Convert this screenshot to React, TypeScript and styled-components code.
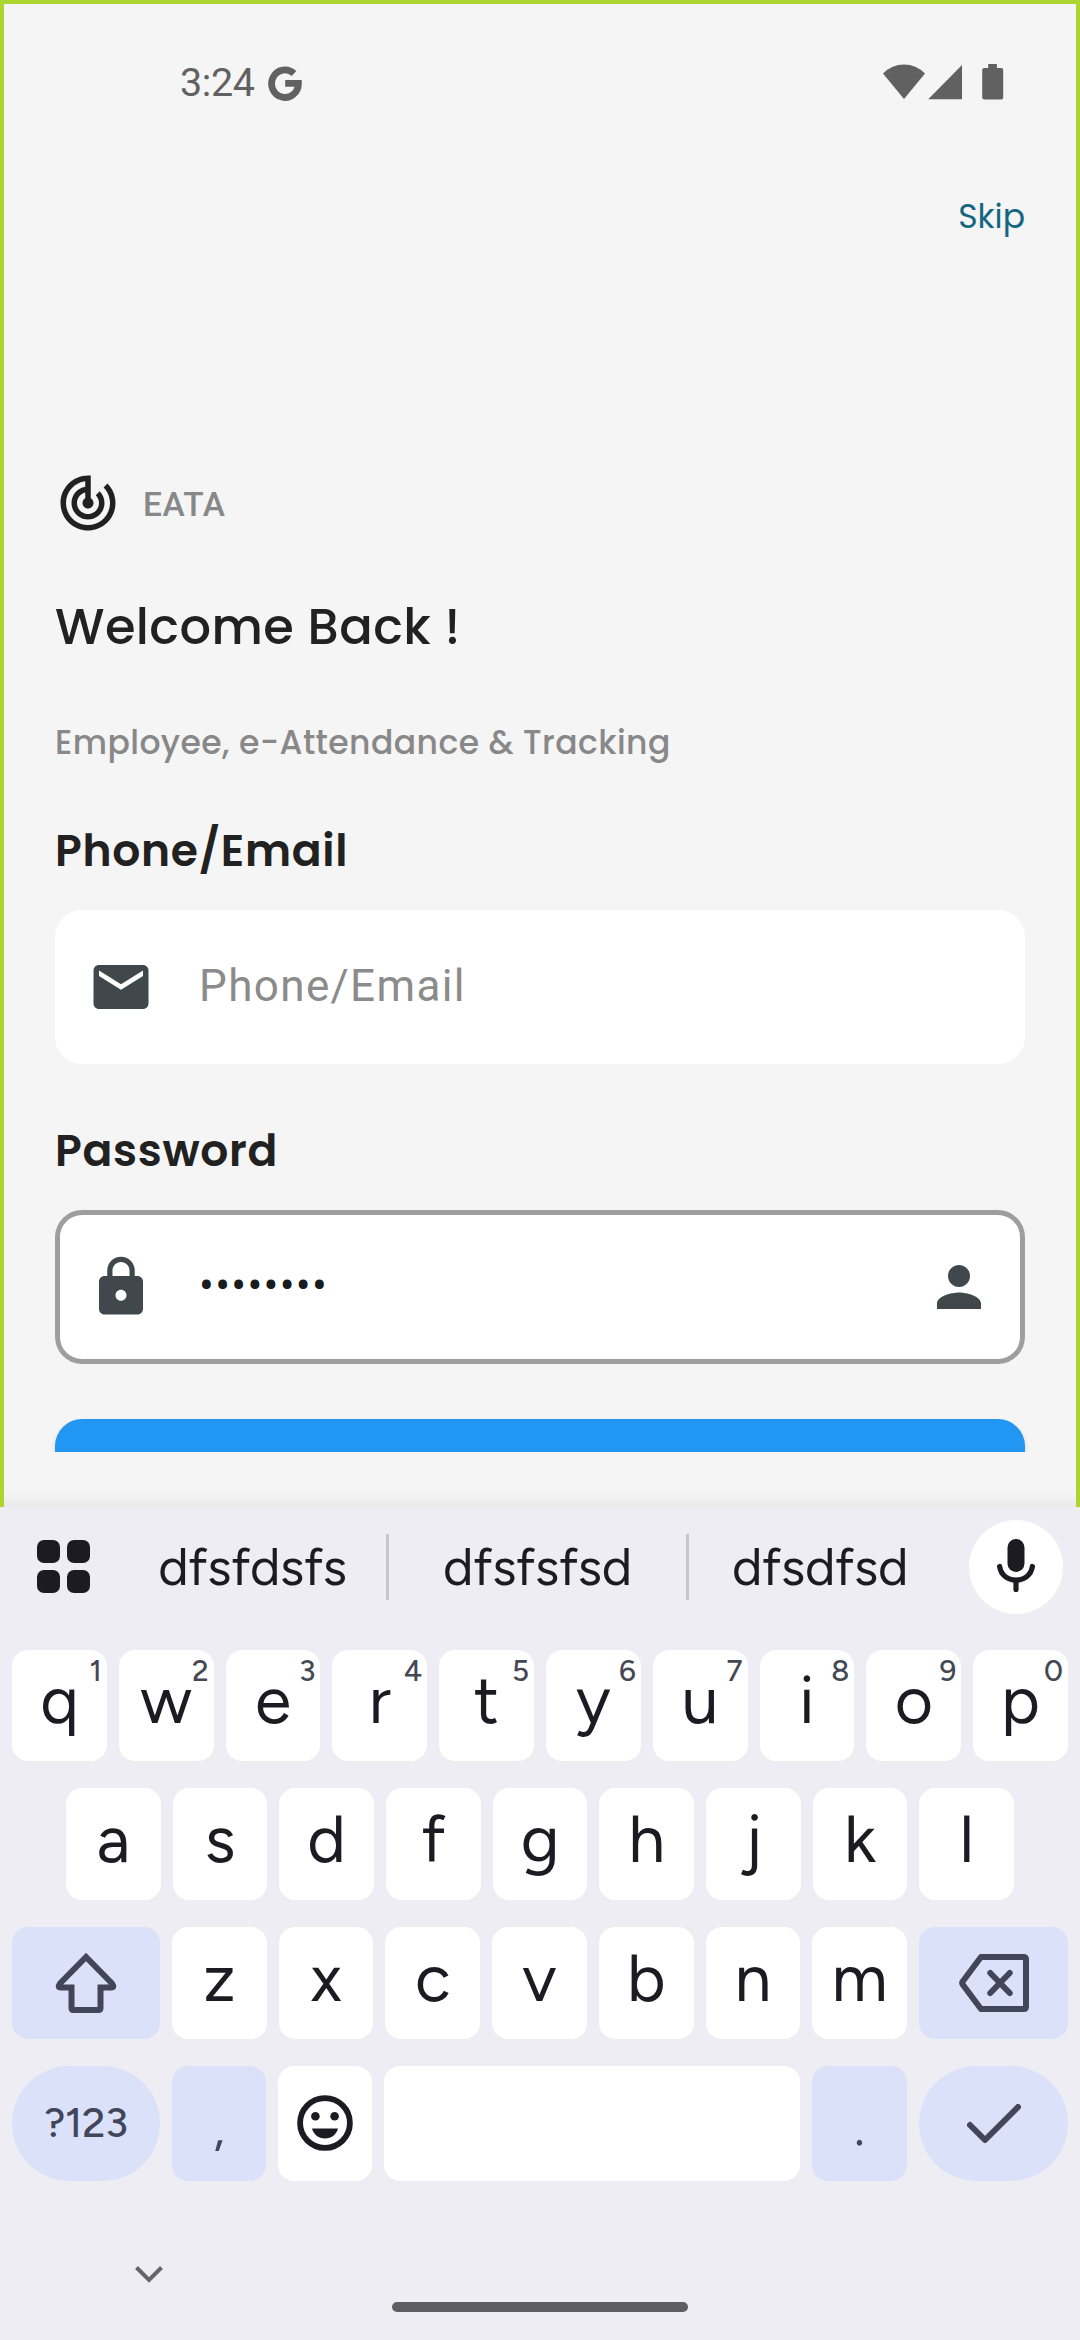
import React from "react";
import styled, { createGlobalStyle } from "styled-components";

const ui = `Poppins, Inter, "Open Sans", sans-serif`;
const roboto = `Roboto, "Noto Sans", sans-serif`;
const keys = `"Google Sans", "Google Sans Text", "Product Sans", Figtree, Outfit, Roboto, sans-serif`;

const GlobalStyle = createGlobalStyle`
  *, *::before, *::after { box-sizing: border-box; }
  body { margin: 0; background: #ededf3; }
  button { border: 0; padding: 0; background: none; font: inherit; color: inherit; }
`;

const Phone = styled.div`
  width: 1080px;
  height: 2340px;
  display: flex;
  flex-direction: column;
  overflow: hidden;
  font-family: ${roboto};
  white-space: nowrap;
`;

const Screen = styled.main`
  height: 1507px;
  flex: none;
  display: flex;
  flex-direction: column;
  border: solid #abd52f;
  border-width: 4px 4px 0;
  background: linear-gradient(to bottom, transparent 1489px, #e9e9e9 1503px) #f5f5f5;
`;

const StatusBar = styled.header`
  height: 156px;
  flex: none;
  display: flex;
  align-items: center;
  padding: 2px 72px 0 176px;
  color: #616161;
`;

const Clock = styled.span`
  width: 88px;
  font-size: 39.5px;
  letter-spacing: -0.4px;
  line-height: 46px;
`;

const StatusIcons = styled.div`
  display: flex;
  margin: -2px 0 0 auto;
`;

const TopBar = styled.div`
  height: 112px;
  flex: none;
  display: flex;
  align-items: center;
  justify-content: flex-end;
  padding: 2px 51px 0 0;
`;

const SkipButton = styled.button`
  font: 400 33px/44px ${ui};
  color: #146683;
`;

const Form = styled.section`
  display: flex;
  flex-direction: column;
  padding: 198px 51px 0;
`;

const Brand = styled.div`
  height: 66px;
  display: flex;
  align-items: center;
  gap: 22px;
  color: #212121;
`;

const BrandName = styled.span`
  padding-top: 3px;
  font: 500 33.5px/44px ${roboto};
  letter-spacing: 0.6px;
  color: #888888;
`;

const Title = styled.h1`
  margin: 56px 0 0;
  font: 500 49.5px/70px ${ui};
  letter-spacing: 0.43px;
  color: #212121;
`;

const Tagline = styled.p`
  margin: 59px 0 0;
  font: 500 33px/44px ${ui};
  letter-spacing: 0.43px;
  color: #888888;
`;

const Label = styled.label<{ $first?: boolean }>`
  margin: ${(p) => (p.$first ? 56 : 57)}px 0 29px;
  font: 600 44px/60px ${ui};
  letter-spacing: 0.72px;
  color: #212121;
`;

const Field = styled.div<{ $focused?: boolean }>`
  height: 154px;
  display: flex;
  align-items: center;
  gap: 44px;
  padding: 0 33px;
  border-radius: 27px;
  background: #ffffff;
  color: #40484c;
  box-shadow: ${(p) => (p.$focused ? "inset 0 0 0 5px #9e9e9e" : "none")};
`;

const Placeholder = styled.span`
  flex: 1;
  padding: 0 0 3px 1px;
  font-size: 44px;
  line-height: 54px;
  letter-spacing: 1.375px;
  color: #8b8b8b;
`;

const Secret = styled.span`
  flex: 1;
  padding: 0 0 3px 1px;
  font-size: 44px;
  line-height: 54px;
  letter-spacing: 1.3px;
  color: #171d1e;
`;

const SubmitClip = styled.div`
  height: 53px;
  margin: 35px -20px 0;
  padding: 20px 20px 0;
  overflow: hidden;
`;

const Submit = styled.div`
  height: 154px;
  border-radius: 27px;
  background: #2196f3;
  box-shadow: 0 3px 5px rgba(0, 0, 0, 0.12);
`;

const Keyboard = styled.section`
  flex: 1;
  display: flex;
  flex-direction: column;
  background: #ededf3;
  color: #1b1b21;
`;

const Strip = styled.div`
  height: 120px;
  display: flex;
  align-items: center;
  padding: 0 17px 0 37px;
`;

const Suggestion = styled.span<{ $w: number }>`
  width: ${(p) => p.$w}px;
  text-align: center;
  font: 400 52px/60px ${keys};
  letter-spacing: -0.3px;
`;

const Divider = styled.i`
  width: 3px;
  height: 66px;
  background: #c6c5d0;
`;

const GridIcon = styled.div`
  width: 82px;
  display: grid;
  grid-template-columns: 23px 23px;
  gap: 7px;
  margin-top: -2px;
`;

const GridCell = styled.i`
  height: 23px;
  border-radius: 7px;
  background: #1b1b21;
`;

const MicButton = styled.button`
  width: 94px;
  height: 94px;
  margin-left: auto;
  display: grid;
  place-items: center;
  border-radius: 50%;
  background: #ffffff;
`;

const Keys = styled.div`
  display: flex;
  flex-direction: column;
  gap: 27px;
  padding: 23px 12px 0;
`;

const Row = styled.div<{ $inset?: number; $h?: number }>`
  height: ${(p) => p.$h ?? 112}px;
  display: flex;
  gap: 12px;
  padding: 0 ${(p) => p.$inset ?? 0}px;
`;

const Key = styled.button<{ $w?: number; $tone?: "soft"; $round?: boolean }>`
  position: relative;
  flex: ${(p) => (p.$w ? `0 0 ${p.$w}px` : "1 1 0")};
  min-width: 0;
  display: flex;
  align-items: center;
  justify-content: center;
  border-radius: ${(p) => (p.$round ? 58 : 16)}px;
  background: ${(p) => (p.$tone ? "#dce1fa" : "#ffffff")};
  color: ${(p) => (p.$tone ? "#42465a" : "#1b1b21")};
`;

const Letter = styled.span`
  padding-bottom: 11px;
  font: 400 66px/72px ${keys};
`;

const Hint = styled.sup`
  position: absolute;
  top: 4px;
  right: 5px;
  font: 500 29.5px/34px ${keys};
  color: #454852;
`;

const ModeLabel = styled.span`
  padding-bottom: 1px;
  font: 500 41.5px/48px ${keys};
  letter-spacing: -0.2px;
`;

const Punct = styled.span`
  padding-top: 9px;
  font: 400 50px/60px ${keys};
`;

const NavBar = styled.footer`
  flex: 1;
  display: grid;
  grid-template-columns: 392px 296px;
  align-items: start;
`;

const HideKeyboard = styled.button`
  display: flex;
  padding: 83px 0 0 133px;
`;

const HomeBar = styled.i`
  height: 10px;
  margin-top: 121px;
  border-radius: 5px;
  background: #5f5f61;
`;

const MaterialIcon = ({ d }: { d: string }) => (
  <svg width="66" height="66" viewBox="0 0 24 24" fill="currentColor">
    <path d={d} />
  </svg>
);

const TRACK =
  "M19.07 4.93l-1.41 1.41C19.1 7.79 20 9.79 20 12c0 4.42-3.58 8-8 8s-8-3.58-8-8c0-4.08 3.05-7.44 7-7.93v2.02C8.16 6.57 6 9.03 6 12c0 3.31 2.69 6 6 6s6-2.69 6-6c0-1.66-.67-3.16-1.76-4.24l-1.41 1.41C15.55 9.9 16 10.9 16 12c0 2.21-1.79 4-4 4s-4-1.79-4-4c0-1.86 1.28-3.41 3-3.86v2.14c-.6.35-1 .98-1 1.72 0 1.1.9 2 2 2s2-.9 2-2c0-.74-.4-1.38-1-1.72V2h-1C6.48 2 2 6.48 2 12s4.48 10 10 10 10-4.48 10-10c0-2.76-1.12-5.26-2.93-7.07z";
const MAIL =
  "M20 4H4c-1.1 0-1.99.9-1.99 2L2 18c0 1.1.9 2 2 2h16c1.1 0 2-.9 2-2V6c0-1.1-.9-2-2-2zm0 4l-8 5-8-5V6l8 5 8-5v2z";
const LOCK =
  "M18 8h-1V6c0-2.76-2.24-5-5-5S7 3.24 7 6v2H6c-1.1 0-2 .9-2 2v10c0 1.1.9 2 2 2h12c1.1 0 2-.9 2-2V10c0-1.1-.9-2-2-2zm-6 9c-1.1 0-2-.9-2-2s.9-2 2-2 2 .9 2 2-.9 2-2 2zm3.1-9H8.9V6c0-1.71 1.39-3.1 3.1-3.1 1.71 0 3.1 1.39 3.1 3.1v2z";
const PERSON =
  "M12 12c2.21 0 4-1.79 4-4s-1.79-4-4-4-4 1.79-4 4 1.79 4 4 4zm0 2c-2.67 0-8 1.34-8 4v2h16v-2c0-2.66-5.33-4-8-4z";

const letters = (s: string) => s.split("").map((c) => (
  <Key key={c}>
    <Letter>{c}</Letter>
  </Key>
));

export default function App() {
  return (
    <Phone>
      <GlobalStyle />
      <Screen>
        <StatusBar>
          <Clock>3:24</Clock>
          <svg width="34" height="36" viewBox="0 0 34 36" fill="none" stroke="currentColor" strokeWidth="6.8">
            <path d="M26 8.4A13.4 13.8 0 1 0 30.4 18.4H17.2" />
          </svg>
          <StatusIcons>
            <svg width="121" height="36" viewBox="0 0 121 36" fill="currentColor">
              <path d="M0 9.4Q9 .4 21 .4T42 9.4L21 35z" />
              <path d="M45.200 35.2L79 1v34.2z" />
              <path d="M105.200 0h8.700v4h4.300q2 0 2 2v27.400q0 2-2 2h-17q-2 0-2-2V6q0-2 2-2h4z" />
            </svg>
          </StatusIcons>
        </StatusBar>
        <TopBar>
          <SkipButton>Skip</SkipButton>
        </TopBar>
        <Form>
          <Brand>
            <MaterialIcon d={TRACK} />
            <BrandName>EATA</BrandName>
          </Brand>
          <Title>Welcome Back !</Title>
          <Tagline>Employee, e-Attendance &amp; Tracking</Tagline>
          <Label $first>Phone/Email</Label>
          <Field>
            <MaterialIcon d={MAIL} />
            <Placeholder>Phone/Email</Placeholder>
          </Field>
          <Label>Password</Label>
          <Field $focused>
            <MaterialIcon d={LOCK} />
            <Secret>••••••••</Secret>
            <MaterialIcon d={PERSON} />
          </Field>
          <SubmitClip>
            <Submit />
          </SubmitClip>
        </Form>
      </Screen>

      <Keyboard>
        <Strip>
          <GridIcon>
            <GridCell />
            <GridCell />
            <GridCell />
            <GridCell />
          </GridIcon>
          <Suggestion $w={267}>dfsfdsfs</Suggestion>
          <Divider />
          <Suggestion $w={297}>dfsfsfsd</Suggestion>
          <Divider />
          <Suggestion $w={262}>dfsdfsd</Suggestion>
          <MicButton>
            <svg width="40" height="56" viewBox="0 0 40 56" fill="none" stroke="#1b1b21" strokeWidth="5.200" strokeLinecap="round">
              <rect x="11.500" y="0" width="17" height="33" rx="8.500" fill="#1b1b21" stroke="none" />
              <path d="M3.600 27.500C5 36 11.500 41 20 41s15-5 16.400-13.500M20 42v8.500" />
            </svg>
          </MicButton>
        </Strip>

        <Keys>
          <Row $h={111}>
            {"qwertyuiop".split("").map((c, i) => (
              <Key key={c}>
                <Letter>{c}</Letter>
                <Hint>{(i + 1) % 10}</Hint>
              </Key>
            ))}
          </Row>
          <Row $inset={54}>{letters("asdfghjkl")}</Row>
          <Row>
            <Key $w={148} $tone="soft">
              <svg width="62" height="62" viewBox="0 0 62 62" fill="none" stroke="currentColor" strokeWidth="6" strokeLinejoin="round">
                <path d="M31 5L5 31.500q-3 4 1 4h10.500V56q0 2 2 2h25q2 0 2-2V35.500H56q4 0 1-4z" strokeLinejoin="miter" />
              </svg>
            </Key>
            {letters("zxcvbnm")}
            <Key $w={149} $tone="soft">
              <svg width="70" height="58" viewBox="0 0 70 58" fill="none" stroke="currentColor" strokeWidth="6" strokeLinejoin="round" strokeLinecap="round">
                <path d="M22 3h42.500q2.500 0 2.500 2.500v47q0 2.500-2.500 2.500H22L3.700 30.500q-1-1.500 0-3z" />
                <path d="M31.300 19l19.400 20M50.700 19L31.300 39" />
              </svg>
            </Key>
          </Row>
          <Row $h={115}>
            <Key $w={148} $tone="soft" $round>
              <ModeLabel>?123</ModeLabel>
            </Key>
            <Key $w={94} $tone="soft">
              <Punct>,</Punct>
            </Key>
            <Key $w={94}>
              <svg width="56" height="58" viewBox="0 0 56 58" fill="currentColor">
                <circle cx="28" cy="28" r="24.900" fill="none" stroke="currentColor" strokeWidth="5.800" />
                <circle cx="18.400" cy="21.200" r="4.300" />
                <circle cx="37.600" cy="21.200" r="4.300" />
                <path d="M15 33.500h26C39.500 39.500 34.500 43.500 28 43.500S16.500 39.500 15 33.500z" />
              </svg>
            </Key>
            <Key />
            <Key $w={95} $tone="soft">
              <Punct>.</Punct>
            </Key>
            <Key $w={149} $tone="soft" $round>
              <svg width="54" height="40" viewBox="0 0 54 40" fill="none" stroke="currentColor" strokeWidth="6" strokeLinecap="round" strokeLinejoin="round">
                <path d="M3 21l15 15L51 3" />
              </svg>
            </Key>
          </Row>
        </Keys>

        <NavBar>
          <HideKeyboard>
            <svg width="32" height="20" viewBox="0 0 32 20" fill="none" stroke="#666666" strokeWidth="4">
              <path d="M3.500 3.500L16 16 28.500 3.500" />
            </svg>
          </HideKeyboard>
          <HomeBar />
        </NavBar>
      </Keyboard>
    </Phone>
  );
}
